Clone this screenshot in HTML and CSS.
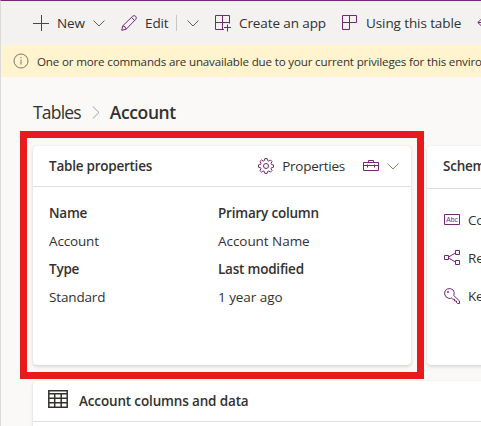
FILE: index.html
```html
<!DOCTYPE html>
<html lang="en">
<head>
<meta charset="utf-8">
<title>Account - Tables</title>
<link rel="stylesheet" href="styles.css">
</head>
<body>
<div class="app">
  <nav class="toolbar">
    <span class="cmd new"><svg class="ic" width="16" height="16" viewBox="0 0 16 16"><path d="M8.5 0v16M0 8.5h16"/></svg><span>New</span><svg class="chev" width="12" height="7" viewBox="0 0 12 7"><path d="M.5 .5 6 6 11.500 .5"/></svg></span>
    <span class="cmd edit"><svg class="ic" width="16" height="16" viewBox="0 0 16 16"><path d="M.7 15.300 1.800 10.800 11.700 1.200Q13.200 0 14.700 1.300 16 2.800 14.800 4.300L5.200 14.200ZM1.800 10.800Q4.600 11.200 5.200 14.200M10.500 2.500l3.200 3.200"/></svg><span>Edit</span><i class="sep"></i><svg class="chev" width="12" height="7" viewBox="0 0 12 7"><path d="M.5 .5 6 6 11.500 .5"/></svg></span>
    <span class="cmd create"><svg class="ic" width="17" height="17" viewBox="0 0 17 17"><path d="M9 14.500H.5V.5h14v8M.5 7.500h14M7.500 .5v14M12.500 9.500v7M9 12.500h7"/></svg><span>Create an app</span></span>
    <span class="cmd using"><svg class="ic" width="16" height="16" viewBox="0 0 16 16"><path d="M.5 .5h14v7H.5zM.5 7.500v7h7V.5"/></svg><span>Using this table</span></span>
    <svg class="ic more" width="16" height="10" viewBox="0 0 16 10"><path d="M5 .5.800 4.500 5 8.500M1 4.500h14"/></svg>
  </nav>
  <div class="notice"><svg class="info" width="16" height="16" viewBox="0 0 16 16"><circle cx="8" cy="8" r="7"/><path d="M8 6.500v5M8 4v1.200"/></svg><span>One or more commands are unavailable due to your current privileges for this environment</span></div>
  <main>
    <header class="crumbs"><span>Tables</span><svg class="chev" width="8" height="13" viewBox="0 0 8 13"><path d="M.8 .5 7 6.500.800 12.500"/></svg><b>Account</b></header>
    <div class="cards">
      <section class="card props">
        <div class="head">
          <b>Table properties</b>
          <span class="actions">
            <svg class="ic gear" width="16" height="16" viewBox="0 0 16 16"><path d="M6.800 .6h2.400l.4 2 1.200.5 1.700-1.100 1.600 1.600-1.100 1.700.5 1.200 2 .4v2.300l-2 .4-.5 1.200 1.100 1.700-1.600 1.600-1.700-1.100-1.200.5-.4 1.900H6.800l-.4-1.900-1.200-.5-1.700 1.100-1.600-1.600L3 10.800l-.5-1.200-2-.4V6.900l2-.4L3 5.300 1.900 3.600 3.500 2l1.700 1.100 1.200-.5z"/><circle cx="8" cy="8" r="2.500"/></svg>
            <span class="link">Properties</span>
            <svg class="ic box" width="16" height="12" viewBox="0 0 16 12"><path d="M.5 2.500h15v8H.5zM5.500 2.500v-2h5v2M.5 5.500h15M4.500 4.500v3M11.500 4.500v3"/></svg>
            <svg class="chev gold" width="12" height="7" viewBox="0 0 12 7"><path d="M.5 .5 6 6 11.500 .5"/></svg>
          </span>
        </div>
        <div class="grid">
          <b>Name</b><b>Primary column</b>
          <span>Account</span><span class="wide">Account Name</span>
          <b>Type</b><b>Last modified</b>
          <span>Standard</span><span class="wide">1 year ago</span>
        </div>
      </section>
      <section class="card schema">
        <div class="head"><b>Schema</b></div>
        <ul>
          <li><svg class="ic" width="16" height="16" viewBox="0 0 16 16"><path d="M.5 2.500h15v10H.5z"/><text x="2.200" y="10" textLength="11.600" lengthAdjust="spacingAndGlyphs">Abc</text></svg><span>Columns</span></li>
          <li><svg class="ic" width="16" height="16" viewBox="0 0 16 16"><path d="M.5 5.500h4v4h-4zM11.500 .5h4v4h-4zM11.500 10.500h4v4h-4zM4.500 7l7-4M4.500 8l7 4"/></svg><span>Relationships</span></li>
          <li><svg class="ic" width="16" height="16" viewBox="0 0 16 16"><path d="M9.700 7.500Q11.200 4.300 9 1.900 6.500-.3 3.200 1 .2 2.500.6 6q.7 3.500 4.200 4.400 1.500.2 2.700-.4l1.300 1.200h1.700V13h2v1.700l1 .8h2v-2.600z"/><circle cx="4" cy="4" r=".6"/></svg><span>Keys</span></li>
        </ul>
      </section>
      <div class="highlight"></div>
    </div>
    <section class="card data">
      <div class="head"><svg class="table" width="20" height="18" viewBox="0 0 20 18"><path d="M.8 .8h18.400v16.400H.8zM.8 3.700h18.400M.8 8.200h18.400M.8 12.700h18.400M6.700 3.700v13.500M13.200 3.700v13.500"/></svg><b>Account columns and data</b></div>
    </section>
  </main>
</div>
</body>
</html>
```

FILE: styles.css
```css
* { box-sizing: border-box; }
body { margin: 0; font: 13.5px/20px "Open Sans", "Noto Sans", sans-serif; letter-spacing: -.15px; color: #323130; overflow: hidden; }
b { font-weight: 600; letter-spacing: -.22px; }
svg { display: block; flex: none; fill: none; overflow: visible; }
span, b { white-space: nowrap; }
.app { height: 426px; border-left: 1px solid #dcdad8; border-top: 1px solid #742774; background: #faf9f8; overflow: hidden; }
.ic { stroke: #742774; }
.chev { stroke: #605e5c; }
.toolbar { height: 44px; background: #f3f2f1; display: flex; align-items: center; padding: 0 0 0 32px; letter-spacing: -.1px; }
.cmd { display: flex; align-items: center; flex: none; }
.new { width: 88px; }
.edit { width: 94px; }
.create { width: 127px; }
.using { width: 134px; }
.cmd .ic { margin-right: 8px; }
.create .ic { margin-right: 7px; }
.new .chev { margin-left: 8px; }
.sep { width: 1px; height: 16px; background: #c8c6c4; margin: 0 10px 0 7px; }
.more { margin-left: 1px; }
.notice { height: 32px; background: #fff4ce; display: flex; align-items: center; font-size: 11.6px; letter-spacing: -.17px; padding-left: 12px; gap: 8px; }
.notice span { padding-top: 2px; }
.info { stroke: #797775; }
main { padding: 24px 0 0 32px; }
.crumbs { display: flex; align-items: center; height: 22px; font-size: 17.5px; letter-spacing: -.8px; margin-bottom: 23px; }
.crumbs b { letter-spacing: -.4px; }
.crumbs .chev { stroke: #a19f9d; margin: 0 10px 0 11px; }
.cards { display: flex; gap: 16px; height: 219px; position: relative; }
.card { background: #fff; border-radius: 4px; box-shadow: 0 1.6px 3.6px rgba(0,0,0,.13), 0 0 1px rgba(0,0,0,.1); flex: none; }
.props { width: 378px; }
.schema { width: 200px; }
.head { display: flex; align-items: center; height: 41px; border-bottom: 1px solid #e1dfdd; padding-left: 16px; }
.head b { letter-spacing: -.24px; }
.actions { display: flex; align-items: center; margin-left: auto; padding-right: 12px; }
.gear { margin-right: 8px; }
.link { letter-spacing: -.25px; }
.box { margin: 0 8px 0 18px; }
.gold { stroke: #9a8550; }
.grid { display: grid; grid-template-columns: 169px 1fr; grid-auto-rows: 28px; align-items: center; padding: 12px 16px; }
.grid .wide { letter-spacing: -.05px; }
.schema .head { height: 43px; padding-bottom: 2px; }
ul { list-style: none; margin: 0; padding: 12px 0 0 17px; }
li { display: flex; align-items: center; gap: 8px; height: 38px; }
li text { font: 400 7px "Liberation Sans", sans-serif; letter-spacing: 0; fill: #742774; stroke: none; }
.highlight { position: absolute; left: -13px; top: -15px; width: 404px; height: 248px; border: 7px solid #e81a1a; }
.data { margin-top: 16px; height: 80px; width: 594px; }
.data .head b { letter-spacing: -.15px; }
.table { stroke: #323130; stroke-width: 1.5; margin: -4px 11px 0 -1px; }
```
